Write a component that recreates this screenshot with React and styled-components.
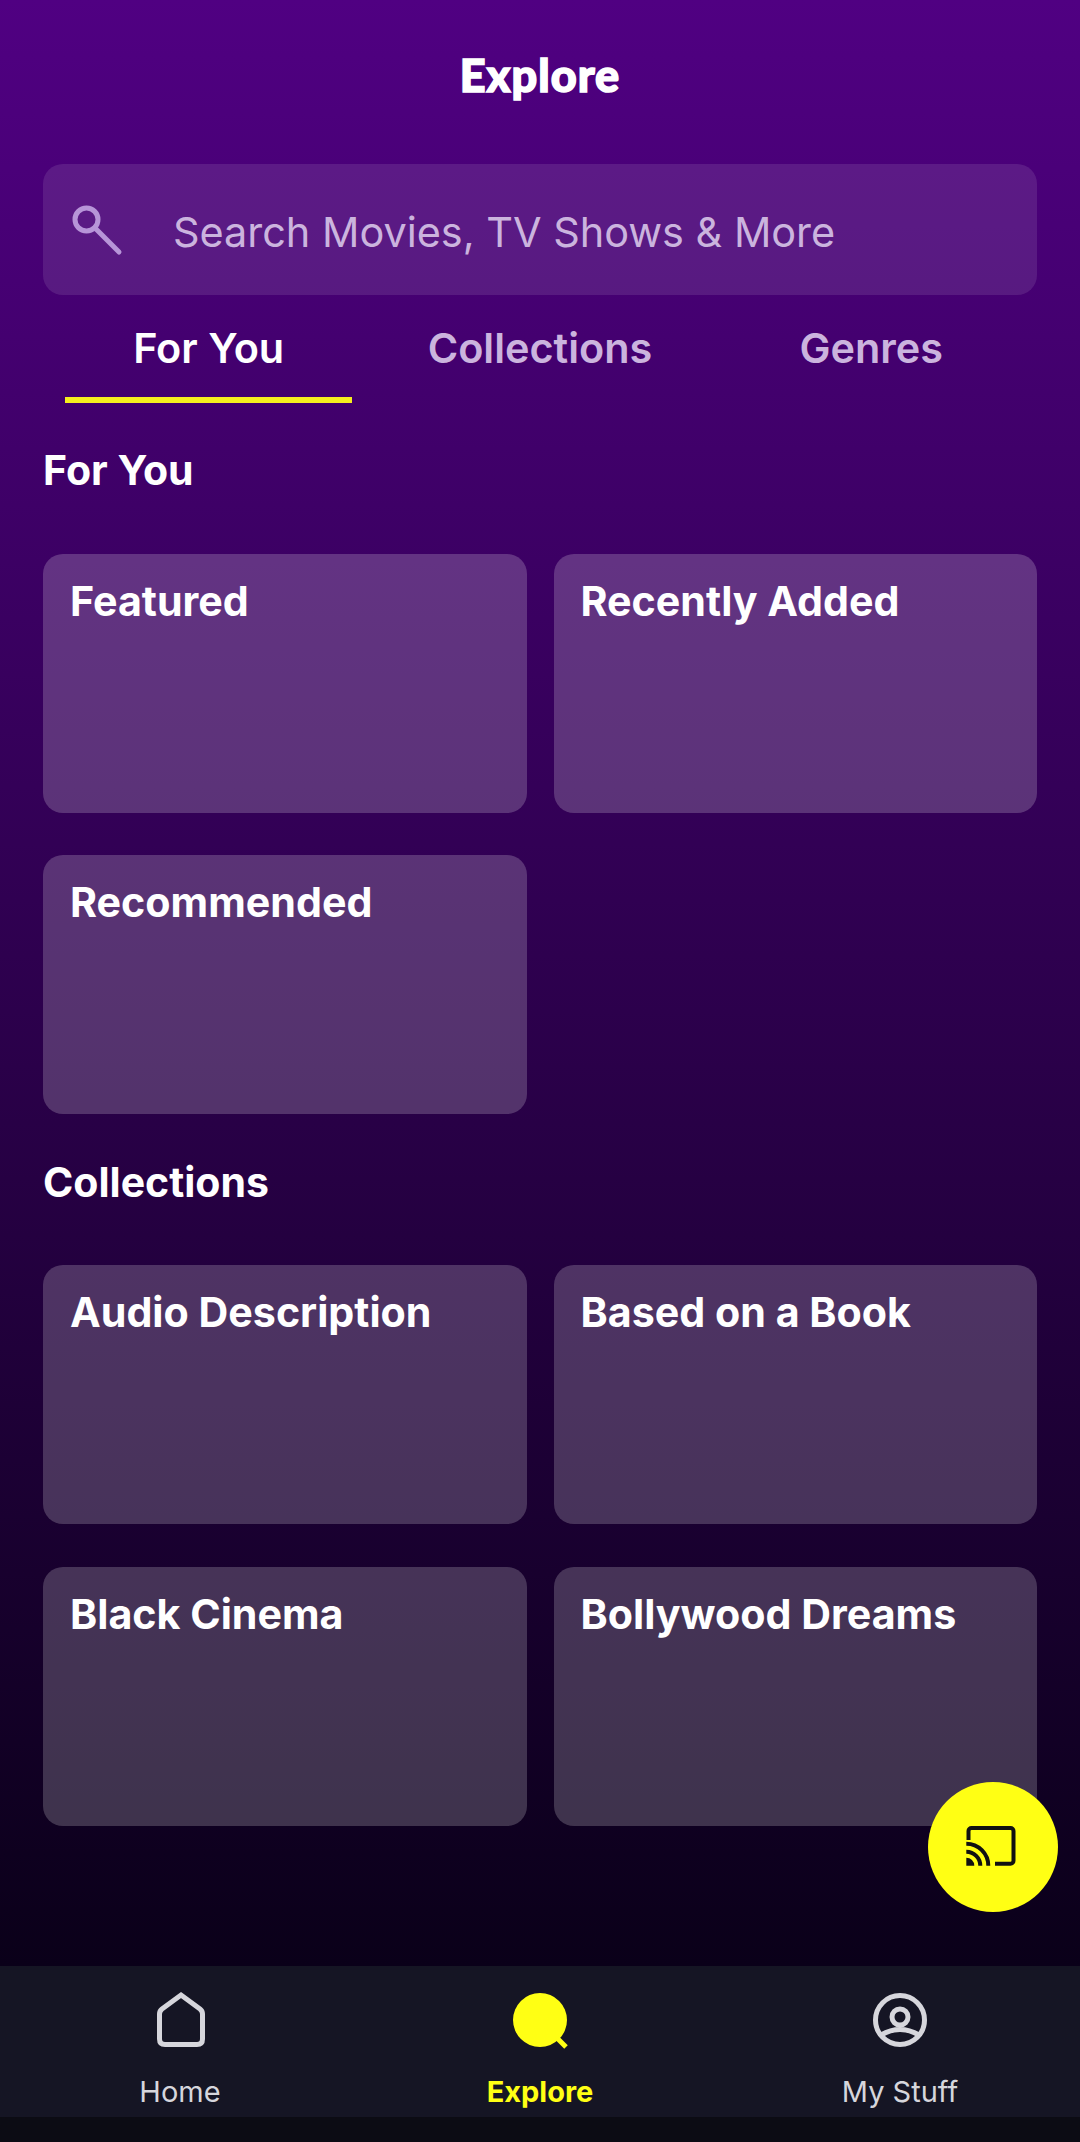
import React from 'react';
import styled, { createGlobalStyle } from 'styled-components';

const GlobalStyle = createGlobalStyle`
  html, body {
    margin: 0;
    padding: 0;
    background: #0c0c14;
  }
`;

const Page = styled.div`
  position: relative;
  width: 1080px;
  height: 2142px;
  display: flex;
  flex-direction: column;
  overflow: hidden;
  font-family: Inter, "Liberation Sans", sans-serif;
  color: #fff;
`;

const Main = styled.main`
  flex: 1;
  padding: 0 43px;
  background: linear-gradient(180deg, #500082 0%, #0a0019 100%);
`;

const Header = styled.h1`
  margin: 0 0 14px;
  height: 150px;
  display: flex;
  align-items: center;
  justify-content: center;
  font-family: Lato, sans-serif;
  font-size: 45px;
  font-weight: 900;
  letter-spacing: 1px;
  -webkit-text-stroke: 1.5px #fff;
`;

const SearchBar = styled.div`
  height: 131px;
  display: flex;
  align-items: center;
  border-radius: 20px;
  background: rgba(255, 255, 255, 0.1);
  color: #cbb4de;
  font-size: 41.4px;
`;

const SearchIcon = styled.svg`
  width: 90px;
  height: 75px;
  margin-left: 12px;
  margin-right: 28px;
  flex: none;
`;

const Placeholder = styled.span`
  padding-top: 5px;
`;

const Tabs = styled.div`
  display: grid;
  grid-template-columns: repeat(3, 1fr);
`;

const Tab = styled.div`
  position: relative;
  height: 108px;
  padding-bottom: 2px;
  box-sizing: border-box;
  display: flex;
  align-items: center;
  justify-content: center;
  font-size: 41.4px;
  font-weight: 600;
  color: ${({ $active }) => ($active ? '#fff' : '#cbb4de')};

  ${({ $active }) =>
    $active &&
    `&::after {
      content: '';
      position: absolute;
      left: 22px;
      right: 22px;
      bottom: 0;
      height: 6px;
      background: #f5ef1e;
    }`}
`;

const SectionTitle = styled.h2`
  margin: ${({ $first }) => ($first ? '43px 0 60px' : '44px 0 59px')};
  font-size: 41px;
  line-height: 48px;
  font-weight: 700;
`;

const CardGrid = styled.div`
  display: grid;
  grid-template-columns: 1fr 1fr;
  column-gap: 27px;
  row-gap: ${({ $rowGap }) => $rowGap}px;
`;

const Card = styled.div`
  height: 259px;
  box-sizing: border-box;
  padding: 23px 27px;
  border-radius: 20px;
  background: rgba(255, 255, 255, 0.2);
  font-size: 41.2px;
  line-height: 48px;
  font-weight: 700;
`;

const CastButton = styled.button`
  position: absolute;
  right: 22px;
  bottom: 230px;
  width: 130px;
  height: 130px;
  padding: 0;
  border: 0;
  border-radius: 50%;
  background: #ffff14;
  display: flex;
  align-items: center;
  justify-content: center;
`;

const BottomNav = styled.nav`
  height: 151px;
  box-sizing: border-box;
  padding-top: 24px;
  display: grid;
  grid-template-columns: repeat(3, 1fr);
  background: #151524;
`;

const NavItem = styled.div`
  display: flex;
  flex-direction: column;
  align-items: center;
  gap: 24px;
  font-size: 29px;
  line-height: 36px;
  font-weight: ${({ $active }) => ($active ? 700 : 400)};
  color: ${({ $active }) => ($active ? '#ffff14' : '#d6d6dc')};
`;

const FooterStrip = styled.div`
  height: 25px;
  background: #0c0c14;
`;

const HomeIcon = () => (
  <svg width="60" height="60" viewBox="0 0 60 60" fill="none" stroke="#d6d6dc" strokeWidth="5">
    <path d="M31 5 L50 19 Q52.5 21 52.5 24 V49 Q52.5 54.5 47 54.5 H15 Q9.5 54.5 9.5 49 V24 Q9.5 21 12 19 Z" />
  </svg>
);

const ExploreIcon = () => (
  <svg width="60" height="60" viewBox="0 0 60 60" fill="none">
    <circle cx="30" cy="30" r="27" fill="#ffff14" />
    <path d="M46 47 L56 57" stroke="#ffff14" strokeWidth="5" />
  </svg>
);

const ProfileIcon = () => (
  <svg width="60" height="60" viewBox="0 0 60 60" fill="none" stroke="#d6d6dc" strokeWidth="5">
    <circle cx="30" cy="30" r="24.5" />
    <circle cx="30" cy="27" r="8" />
    <path d="M11 45 Q30 34 49 45" />
  </svg>
);

const CastIcon = () => (
  <svg width="90" height="75" viewBox="0 0 90 75" fill="none" stroke="#111" strokeWidth="4">
    <path d="M20.5 30 V21 a3 3 0 0 1 3 -3 H62.5 a3 3 0 0 1 3 3 V50.7 a3 3 0 0 1 -3 3 H47" />
    <path d="M18.3 47.7 a8 8 0 0 1 8 8 H18.3 Z" fill="#111" stroke="none" />
    <path d="M18.3 41.7 a14 14 0 0 1 14 14" />
    <path d="M18.3 33.7 a22 22 0 0 1 22 22" />
  </svg>
);

const forYou = ['Featured', 'Recently Added', 'Recommended'];
const collections = ['Audio Description', 'Based on a Book', 'Black Cinema', 'Bollywood Dreams'];

const App = () => {
  return (
    <Page>
      <GlobalStyle />
      <Main>
        <Header>Explore</Header>
        <SearchBar>
          <SearchIcon viewBox="0 0 90 75" fill="none" stroke="#b795d8" strokeWidth="5">
            <circle cx="31.5" cy="27.5" r="11.5" />
            <path d="M40 36 L64 60" strokeLinecap="round" />
          </SearchIcon>
          <Placeholder>Search Movies, TV Shows &amp; More</Placeholder>
        </SearchBar>
        <Tabs>
          <Tab $active>For You</Tab>
          <Tab>Collections</Tab>
          <Tab>Genres</Tab>
        </Tabs>
        <SectionTitle $first>For You</SectionTitle>
        <CardGrid $rowGap={42}>
          {forYou.map((name) => (
            <Card key={name}>{name}</Card>
          ))}
        </CardGrid>
        <SectionTitle>Collections</SectionTitle>
        <CardGrid $rowGap={43}>
          {collections.map((name) => (
            <Card key={name}>{name}</Card>
          ))}
        </CardGrid>
      </Main>
      <CastButton aria-label="Cast">
        <CastIcon />
      </CastButton>
      <BottomNav>
        <NavItem>
          <HomeIcon />
          Home
        </NavItem>
        <NavItem $active>
          <ExploreIcon />
          Explore
        </NavItem>
        <NavItem>
          <ProfileIcon />
          My Stuff
        </NavItem>
      </BottomNav>
      <FooterStrip />
    </Page>
  );
};

export default App;
